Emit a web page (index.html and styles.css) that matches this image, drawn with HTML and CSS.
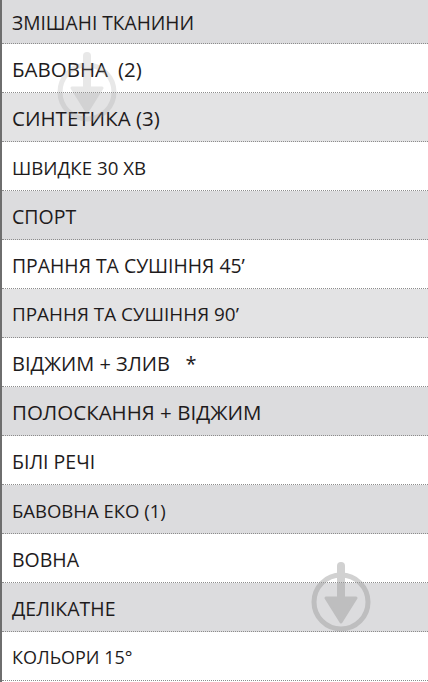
FILE: index.html
```html
<!DOCTYPE html>
<html lang="uk">
<head>
<meta charset="utf-8">
<link rel="stylesheet" href="styles.css">
</head>
<body>
<div class="table">
  <div class="row grey first"><span class="t s19">ЗМІШАНІ ТКАНИНИ</span></div>
  <div class="row white"><span class="t s205">БАВОВНА<span class="gap"></span>(2)</span></div>
  <div class="row grey light"><span class="t s205">СИНТЕТИКА (3)</span></div>
  <div class="row white"><span class="t s187">ШВИДКЕ 30 ХВ</span></div>
  <div class="row grey"><span class="t s195">СПОРТ</span></div>
  <div class="row white"><span class="t s194">ПРАННЯ ТА СУШІННЯ 45’</span></div>
  <div class="row grey light"><span class="t s189">ПРАННЯ ТА СУШІННЯ 90’</span></div>
  <div class="row white"><span class="t s20">ВІДЖИМ + ЗЛИВ&nbsp;&nbsp; *</span></div>
  <div class="row grey"><span class="t s205">ПОЛОСКАННЯ + ВІДЖИМ</span></div>
  <div class="row white"><span class="t s195">БІЛІ РЕЧІ</span></div>
  <div class="row grey"><span class="t s185">БАВОВНА ЕКО (1)</span></div>
  <div class="row white"><span class="t s195">ВОВНА</span></div>
  <div class="row grey"><span class="t s195">ДЕЛІКАТНЕ</span></div>
  <div class="row white"><span class="t s18">КОЛЬОРИ 15°</span></div>

  <svg class="mark mark-a" viewBox="0 0 64 84" width="64" height="84">
    <circle cx="32" cy="48" r="27" fill="none" stroke="#9a9a9a" stroke-width="5"/>
    <rect x="28" y="8" width="8" height="38" rx="4" fill="#9a9a9a"/>
    <path d="M17 44 L47 44 L32 68 Z" fill="#9a9a9a" stroke="#9a9a9a" stroke-width="3" stroke-linejoin="round"/>
  </svg>
  <svg class="mark mark-b" viewBox="0 0 64 84" width="64" height="84">
    <circle cx="32" cy="48" r="27" fill="none" stroke="#9a9a9a" stroke-width="5"/>
    <rect x="28" y="8" width="8" height="38" rx="4" fill="#9a9a9a"/>
    <path d="M17 44 L47 44 L32 68 Z" fill="#9a9a9a" stroke="#9a9a9a" stroke-width="3" stroke-linejoin="round"/>
  </svg>
</div>
</body>
</html>
```

FILE: styles.css
```css
html, body {
  margin: 0;
  padding: 0;
  background: #ffffff;
}
body {
  font-family: "Open Sans", "Noto Sans", sans-serif;
  color: #1e1b1c;
}
.table {
  position: relative;
  width: 428px;
  height: 682px;
  overflow: hidden;
  border-left: 2px solid #6e6e6e;
  box-sizing: border-box;
  display: flex;
  flex-direction: column;
}
.row {
  flex: 0 0 auto;
  height: 49px;
  border-bottom: 1px dotted #8c8c8c;
  display: flex;
  align-items: center;
  padding: 2px 0 0 10px;
  box-sizing: border-box;
}
.row.first {
  height: 44px;
}
.grey { background: #dcdcde; }
.grey.light { background: #e3e3e4; }
.white { background: #ffffff; }
.t {
  white-space: nowrap;
  letter-spacing: 0;
}
.gap {
  display: inline-block;
  width: 10px;
}
.s18 { font-size: 18px; }
.s185 { font-size: 18.5px; }
.s187 { font-size: 18.7px; }
.s189 { font-size: 18.9px; }
.s19 { font-size: 19.2px; }
.s194 { font-size: 19.4px; }
.s195 { font-size: 19.5px; }
.s20 { font-size: 20px; }
.s205 { font-size: 20.5px; }
.mark {
  position: absolute;
  pointer-events: none;
}
.mark-a {
  left: 53px;
  top: 44px;
  opacity: 0.22;
}
.mark-b {
  left: 307px;
  top: 554px;
  opacity: 0.45;
}
```
